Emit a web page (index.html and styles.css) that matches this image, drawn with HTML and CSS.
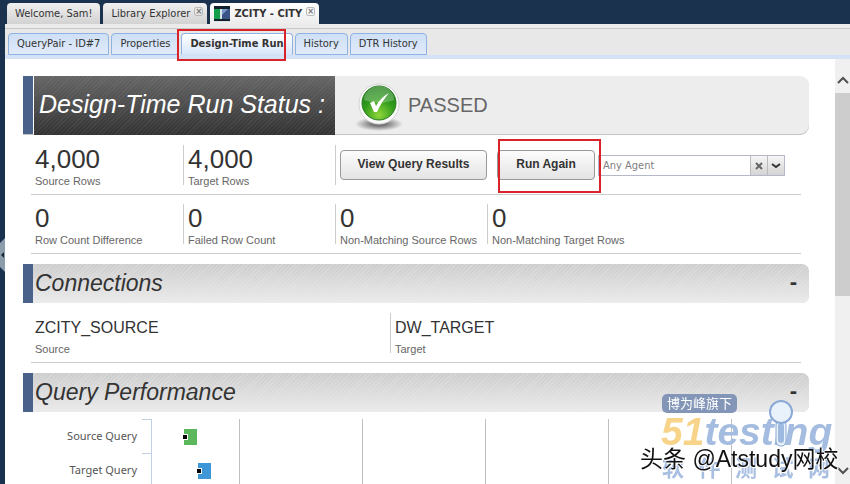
FILE: index.html
```
<!DOCTYPE html>
<html lang="en">
<head>
    <meta charset="UTF-8">
    <meta name="viewport" content="width=device-width, initial-scale=1.0">
    <title>ZCITY - CITY</title>
    <link rel="stylesheet" href="styles.css">
</head>
<body>
    <div class="sidebar">
        <button class="expand" aria-label="Expand sidebar">
            <svg width="5" height="34" viewBox="0 0 5 34"><path d="M0 5 L5 0 V34 L0 29Z" fill="#8d9cab"/><path d="M4 14 L1 17 L4 20Z" fill="#1a2836"/></svg>
        </button>
    </div>

    <div class="app">
        <nav class="main-tabs">
            <a href="#welcome" class="main-tab">Welcome, Sam!</a>
            <a href="#library" class="main-tab">Library Explorer <span class="close">×</span></a>
            <a href="#zcity" class="main-tab active">
                <svg width="16" height="16" viewBox="0 0 16 16">
                    <rect width="16" height="16" fill="#d8e2e8"/>
                    <rect width="16" height="3" fill="#14232b"/>
                    <rect y="13" width="16" height="2" fill="#14232b"/>
                    <rect y="3" width="6" height="10" fill="#12a04a"/>
                    <rect x="8" y="3" width="8" height="10" fill="#3a5488"/>
                    <path d="M8 3 H14 L8 9Z" fill="#7898c8"/>
                </svg>
                ZCITY - CITY <span class="close">×</span>
            </a>
        </nav>

        <nav class="sub-tabs">
            <a href="#pair" class="sub-tab">QueryPair - ID#7</a>
            <a href="#properties" class="sub-tab">Properties</a>
            <a href="#run" class="sub-tab active">Design-Time Run<span class="highlight highlight-tab"></span></a>
            <a href="#history" class="sub-tab">History</a>
            <a href="#dtr" class="sub-tab">DTR History</a>
        </nav>

        <div class="view">
            <main class="content">
                <header class="status">
                    <h1>Design-Time Run Status :</h1>
                    <svg class="check" width="50" height="50" viewBox="0 0 50 50">
                        <defs>
                            <radialGradient id="shade"><stop offset="0.3" stop-color="#777"/><stop offset="1" stop-color="#ededed"/></radialGradient>
                            <radialGradient id="ball" cx="0.5" cy="0.85" r="0.85"><stop offset="0" stop-color="#8fd63a"/><stop offset="0.55" stop-color="#2f9a1c"/><stop offset="1" stop-color="#1a7a14"/></radialGradient>
                        </defs>
                        <ellipse cx="25" cy="43" rx="24" ry="7" fill="url(#shade)"/>
                        <circle cx="25" cy="23" r="20" fill="#fafafa" stroke="#d4d4d4"/>
                        <circle cx="25" cy="22" r="17" fill="url(#ball)" stroke="#2a7a20"/>
                        <path d="M10 19 A15 14 0 0 1 40 19 Q25 25 10 19Z" fill="#fff" opacity="0.25"/>
                        <path d="M16 22 L20 20 L22 25 Q27 16 35 12 Q28 20 23 31 L20 31 Z" fill="#fff"/>
                    </svg>
                    <span class="result">PASSED</span>
                </header>

                <div class="row">
                    <div class="stat"><b>4,000</b><span>Source Rows</span></div>
                    <div class="stat"><b>4,000</b><span>Target Rows</span></div>
                    <div class="stat actions">
                        <button class="btn btn-wide">View Query Results</button>
                        <button class="btn">Run Again<span class="highlight highlight-btn"></span></button>
                        <div class="combo">
                            <input type="text" value="Any Agent" aria-label="Agent">
                            <button aria-label="Clear"><svg width="8" height="8" viewBox="0 0 8 8"><path d="M1 1 L7 7 M7 1 L1 7" stroke="#666" stroke-width="2"/></svg></button>
                            <button aria-label="Open list"><svg width="10" height="8" viewBox="0 0 10 8"><path d="M1 2 L5 5 L9 2" fill="none" stroke="#333" stroke-width="2"/></svg></button>
                        </div>
                    </div>
                </div>

                <div class="row">
                    <div class="stat"><b>0</b><span>Row Count Difference</span></div>
                    <div class="stat"><b>0</b><span>Failed Row Count</span></div>
                    <div class="stat"><b>0</b><span>Non-Matching Source Rows</span></div>
                    <div class="stat"><b>0</b><span>Non-Matching Target Rows</span></div>
                </div>

                <div class="section">
                    <h2>Connections</h2>
                    <button class="toggle" aria-label="Collapse Connections">-</button>
                </div>
                <div class="row">
                    <div class="stat conn"><b>ZCITY_SOURCE</b><span>Source</span></div>
                    <div class="stat conn"><b>DW_TARGET</b><span>Target</span></div>
                </div>

                <div class="section">
                    <h2>Query Performance</h2>
                    <button class="toggle" aria-label="Collapse Query Performance">-</button>
                </div>
                <div class="chart">
                    <div class="labels">
                        <span>Source Query</span>
                        <span>Target Query</span>
                    </div>
                    <div class="ticks"><i></i><i></i><i></i></div>
                    <div class="plot">
                        <div class="lane"><i class="bar source" style="margin-left: 31px"></i></div>
                        <div class="lane"><i class="bar target" style="margin-left: 45px"></i></div>
                    </div>
                </div>
            </main>

            <div class="scrollbar">
                <svg width="12" height="8" viewBox="0 0 12 8"><path d="M1 7 L6 2 L11 7" fill="none" stroke="#505050" stroke-width="2"/></svg>
                <div class="thumb"></div>
                <svg class="down" width="12" height="8" viewBox="0 0 12 8"><path d="M1 1 L6 6 L11 1" fill="none" stroke="#505050" stroke-width="2"/></svg>
            </div>
        </div>
    </div>

    <div class="watermark">
        <span class="badge">博为峰旗下</span>
        <span class="brand"><em>51</em>testıng</span>
        <svg class="lens" width="26" height="50" viewBox="0 0 26 50">
            <path d="M13 25 V41" stroke="#8aa9d6" stroke-width="11" stroke-linecap="round"/>
            <path d="M13 25 V41" stroke="#e9f1fa" stroke-width="9" stroke-linecap="round"/>
            <path d="M13 26 V40" stroke="#9db9e0" stroke-width="6" stroke-linecap="round"/>
            <circle cx="13" cy="12" r="11" fill="#e9f1fa" stroke="#8aa9d6" stroke-width="2"/>
        </svg>
        <div class="brand-cn"><span>软</span><span>件</span><span>测</span><span>试</span><span>网</span></div>
        <span class="author">头条 @Atstudy网校</span>
    </div>
</body>
</html>
```
FILE: styles.css
```
* {
    box-sizing: border-box;
}

body {
    margin: 0;
    height: 100vh;
    display: flex;
    overflow: hidden;
    background: #1b324e;
    font-family: "Liberation Sans", Arial, sans-serif;
    color: #333;
}

button {
    font-family: inherit;
    padding: 0;
    cursor: pointer;
}

.sidebar {
    width: 5px;
    display: flex;
    flex-direction: column;
    padding-top: 238px;
}

.expand {
    border: none;
    background: none;
    width: 5px;
    height: 34px;
}

.expand svg,
.main-tab svg {
    display: block;
}

.app {
    flex: 1;
    min-width: 0;
    display: flex;
    flex-direction: column;
}

/* Tabs */
.main-tabs,
.sub-tabs {
    display: flex;
    flex: none;
    font-family: "DejaVu Sans Condensed", Tahoma, sans-serif;
    font-size: 11px;
    white-space: nowrap;
}

.main-tabs {
    height: 24px;
    padding: 3px 0 0 2px;
    gap: 3px;
}

.main-tab {
    display: flex;
    align-items: center;
    gap: 4px;
    padding: 0 8px;
    border-radius: 4px 4px 0 0;
    background: linear-gradient(#f0f0f0, #d2d2d2);
    color: #333;
    text-decoration: none;
}

.main-tab:has(.close) {
    padding-right: 4px;
}

.main-tab.active {
    padding-left: 4px;
    background: linear-gradient(#fff, #ececec);
    font-weight: bold;
}

.close {
    align-self: flex-start;
    margin-top: 4px;
    width: 9px;
    height: 9px;
    border: 1px solid #bbb;
    border-radius: 2px;
    color: #777;
    font-size: 9px;
    font-weight: bold;
    line-height: 7px;
    text-align: center;
}

.sub-tabs {
    height: 35px;
    padding: 9px 0 0 3px;
    gap: 2px;
    background: linear-gradient(#ebebeb 4px, #c8c8c8 4px, #c8c8c8 5px, #e8e8e8 5px);
    border-bottom: 4px solid #d3e2f7;
}

.sub-tab {
    padding: 0 8px;
    border: 1px solid #8db2e3;
    border-radius: 4px 4px 0 0;
    background: linear-gradient(#cfdff5, #e0ebfa);
    color: #333;
    line-height: 20px;
    text-decoration: none;
}

.sub-tab.active {
    position: relative;
    border-bottom-color: #d3e2f7;
    background: linear-gradient(#fff, #d9e7fa);
    font-weight: bold;
}

.highlight {
    position: absolute;
    border: 2px solid #d8232a;
    z-index: 1;
}

.highlight-tab {
    inset: -5px 6px -7px -5px;
}

.highlight-btn {
    inset: -12px -7px -14px 0;
}

/* Page area */
.view {
    flex: 1;
    min-height: 0;
    display: flex;
    background: #fff;
}

.content {
    flex: 1;
    min-width: 0;
    padding: 17px 26px 0 18px;
    overflow: hidden;
}

.status {
    display: flex;
    align-items: center;
    height: 59px;
    margin-bottom: 1px;
    background: linear-gradient(to right, #4a6289 10px, #fff 10px, #fff 11px, #ededed 11px);
    border-radius: 0 9px 9px 0;
    box-shadow: inset 0 -1px #c4c4c4;
}

.status h1 {
    margin: 0 0 0 11px;
    padding: 0 7px 0 5px;
    min-width: 301px;
    height: 59px;
    background: repeating-linear-gradient(135deg, transparent 0 2px, rgba(255, 255, 255, 0.05) 2px 3px), linear-gradient(#666, #333);
    color: #fff;
    font-size: 25px;
    font-style: italic;
    font-weight: normal;
    line-height: 57px;
    white-space: nowrap;
}

.check {
    margin: 0 4px 0 19px;
}

.result {
    color: #666;
    font-size: 20px;
}

.row {
    display: flex;
    margin: 0 8px;
    padding: 9px 0;
    border-bottom: 1px solid #ccc;
}

.stat {
    display: flex;
    flex-direction: column;
    flex: 0 0 152px;
    height: 40px;
    padding-left: 4px;
    border-left: 1px solid #ccc;
    white-space: nowrap;
}

.stat:first-child {
    border-left: none;
}

.stat b {
    color: #333;
    font-size: 26px;
    font-weight: normal;
    line-height: 29px;
}

.stat span {
    color: #666;
    font-size: 11px;
    line-height: 14px;
}

.stat.conn {
    flex: 0 0 calc(50% - 26px);
}

.stat.conn b {
    font-size: 16px;
}

.stat.actions {
    flex: 1;
    flex-direction: row;
    align-items: center;
}

.btn {
    position: relative;
    flex: 0 0 98px;
    height: 30px;
    margin-right: 3px;
    padding-bottom: 2px;
    border: 1px solid #999;
    border-radius: 4px;
    background: linear-gradient(#fcfcfc, #e4e4e4);
    color: #333;
    font-size: 12px;
    font-weight: bold;
}

.btn-wide {
    flex-basis: 147px;
    margin-right: 10px;
}

.combo {
    display: flex;
    flex: 0 0 187px;
    min-width: 0;
    height: 21px;
    border: 1px solid #b5b8c8;
}

.combo input {
    flex: 1;
    width: 0;
    min-width: 0;
    padding: 0 0 0 4px;
    border: none;
    color: #808080;
    font: 11px "DejaVu Sans Condensed", Tahoma, sans-serif;
}

.combo button {
    flex: none;
    width: 17px;
    border: none;
    border-left: 1px solid #bbb;
    background: linear-gradient(#f6f6f6, #d4d4d4);
}

.section {
    display: flex;
    align-items: center;
    justify-content: space-between;
    height: 39px;
    margin: 10px 0 1px;
    padding: 0 12px 0 2px;
    border-left: 10px solid #4a6289;
    border-radius: 0 7px 7px 0;
    background: linear-gradient(rgba(235, 235, 235, 0), #ebebeb), repeating-linear-gradient(135deg, #cdcdcd 0 2px, #d6d6d6 2px 3px);
}

.section h2 {
    margin: 0;
    font-size: 23px;
    font-style: italic;
    font-weight: normal;
}

.toggle {
    border: none;
    background: none;
    color: #333;
    font-size: 22px;
    font-weight: bold;
    line-height: 22px;
    padding-bottom: 4px;
}

/* Query chart */
.chart {
    display: flex;
    margin-top: 7px;
    height: 102px;
}

.labels {
    width: 114px;
    color: #555;
    font-family: "Noto Sans", sans-serif;
    font-size: 11px;
    line-height: 34px;
    text-align: right;
}

.labels span {
    display: block;
}

.ticks {
    width: 9px;
    margin-left: 5px;
}

.ticks i {
    display: block;
    height: 34px;
    border-top: 1px solid #c0d0e0;
}

.plot {
    flex: 1;
    border-left: 1px solid #c0d0e0;
    background: linear-gradient(to right, #c0c0c0 1px, transparent 1px) 87px 0 / 123px 100% repeat-x;
}

.lane {
    display: flex;
    align-items: center;
    height: 34px;
    padding-top: 2px;
}

.bar {
    width: 14px;
    height: 16px;
    background: linear-gradient(#000, #000) 0 6px / 4px 4px no-repeat, linear-gradient(#fff, #fff) 0 5px / 5px 6px no-repeat, linear-gradient(#5cb85c, #5cb85c) 1px 0 no-repeat;
}

.bar.target {
    background: linear-gradient(#000, #000) 0 6px / 4px 4px no-repeat, linear-gradient(#fff, #fff) 0 5px / 5px 6px no-repeat, linear-gradient(#3f97d8, #3f97d8) 1px 0 no-repeat;
}

/* Scrollbar */
.scrollbar {
    width: 15px;
    display: flex;
    flex-direction: column;
    align-items: center;
    padding: 17px 0 9px;
    background: #f0f0f0;
}

.thumb {
    width: 100%;
    height: 203px;
    margin-top: 9px;
    background: #cdcdcd;
}

.down {
    margin-top: auto;
}

/* Watermark lies over the page corner */
.watermark {
    position: fixed;
    right: 14px;
    bottom: 0;
    width: 196px;
    height: 92px;
    z-index: 2;
    pointer-events: none;
    white-space: nowrap;
    font-family: "Liberation Sans", "Noto Sans CJK SC", sans-serif;
}

.watermark > * {
    position: absolute;
}

.badge {
    left: 22px;
    top: 2px;
    padding: 0 5px;
    border-radius: 5px;
    background: #8396b8;
    color: #fff;
    font-size: 13px;
    line-height: 19px;
}

.brand {
    left: 21px;
    top: 18px;
    color: #a3bce0;
    font-size: 39px;
    font-style: italic;
    font-weight: bold;
    line-height: 44px;
}

.brand em {
    color: #f8d48a;
}

.lens {
    left: 128px;
    top: 8px;
}

.brand-cn {
    left: 22px;
    right: 6px;
    top: 62px;
    display: flex;
    justify-content: space-between;
    color: #a9bfe2;
    font-size: 22px;
    font-weight: bold;
    line-height: 30px;
}

.author {
    left: 0;
    top: 52px;
    color: #111;
    font-size: 23px;
    line-height: 30px;
    text-shadow: 1px 1px #fff, 1px 0 #fff, 0 1px #fff;
}
```
